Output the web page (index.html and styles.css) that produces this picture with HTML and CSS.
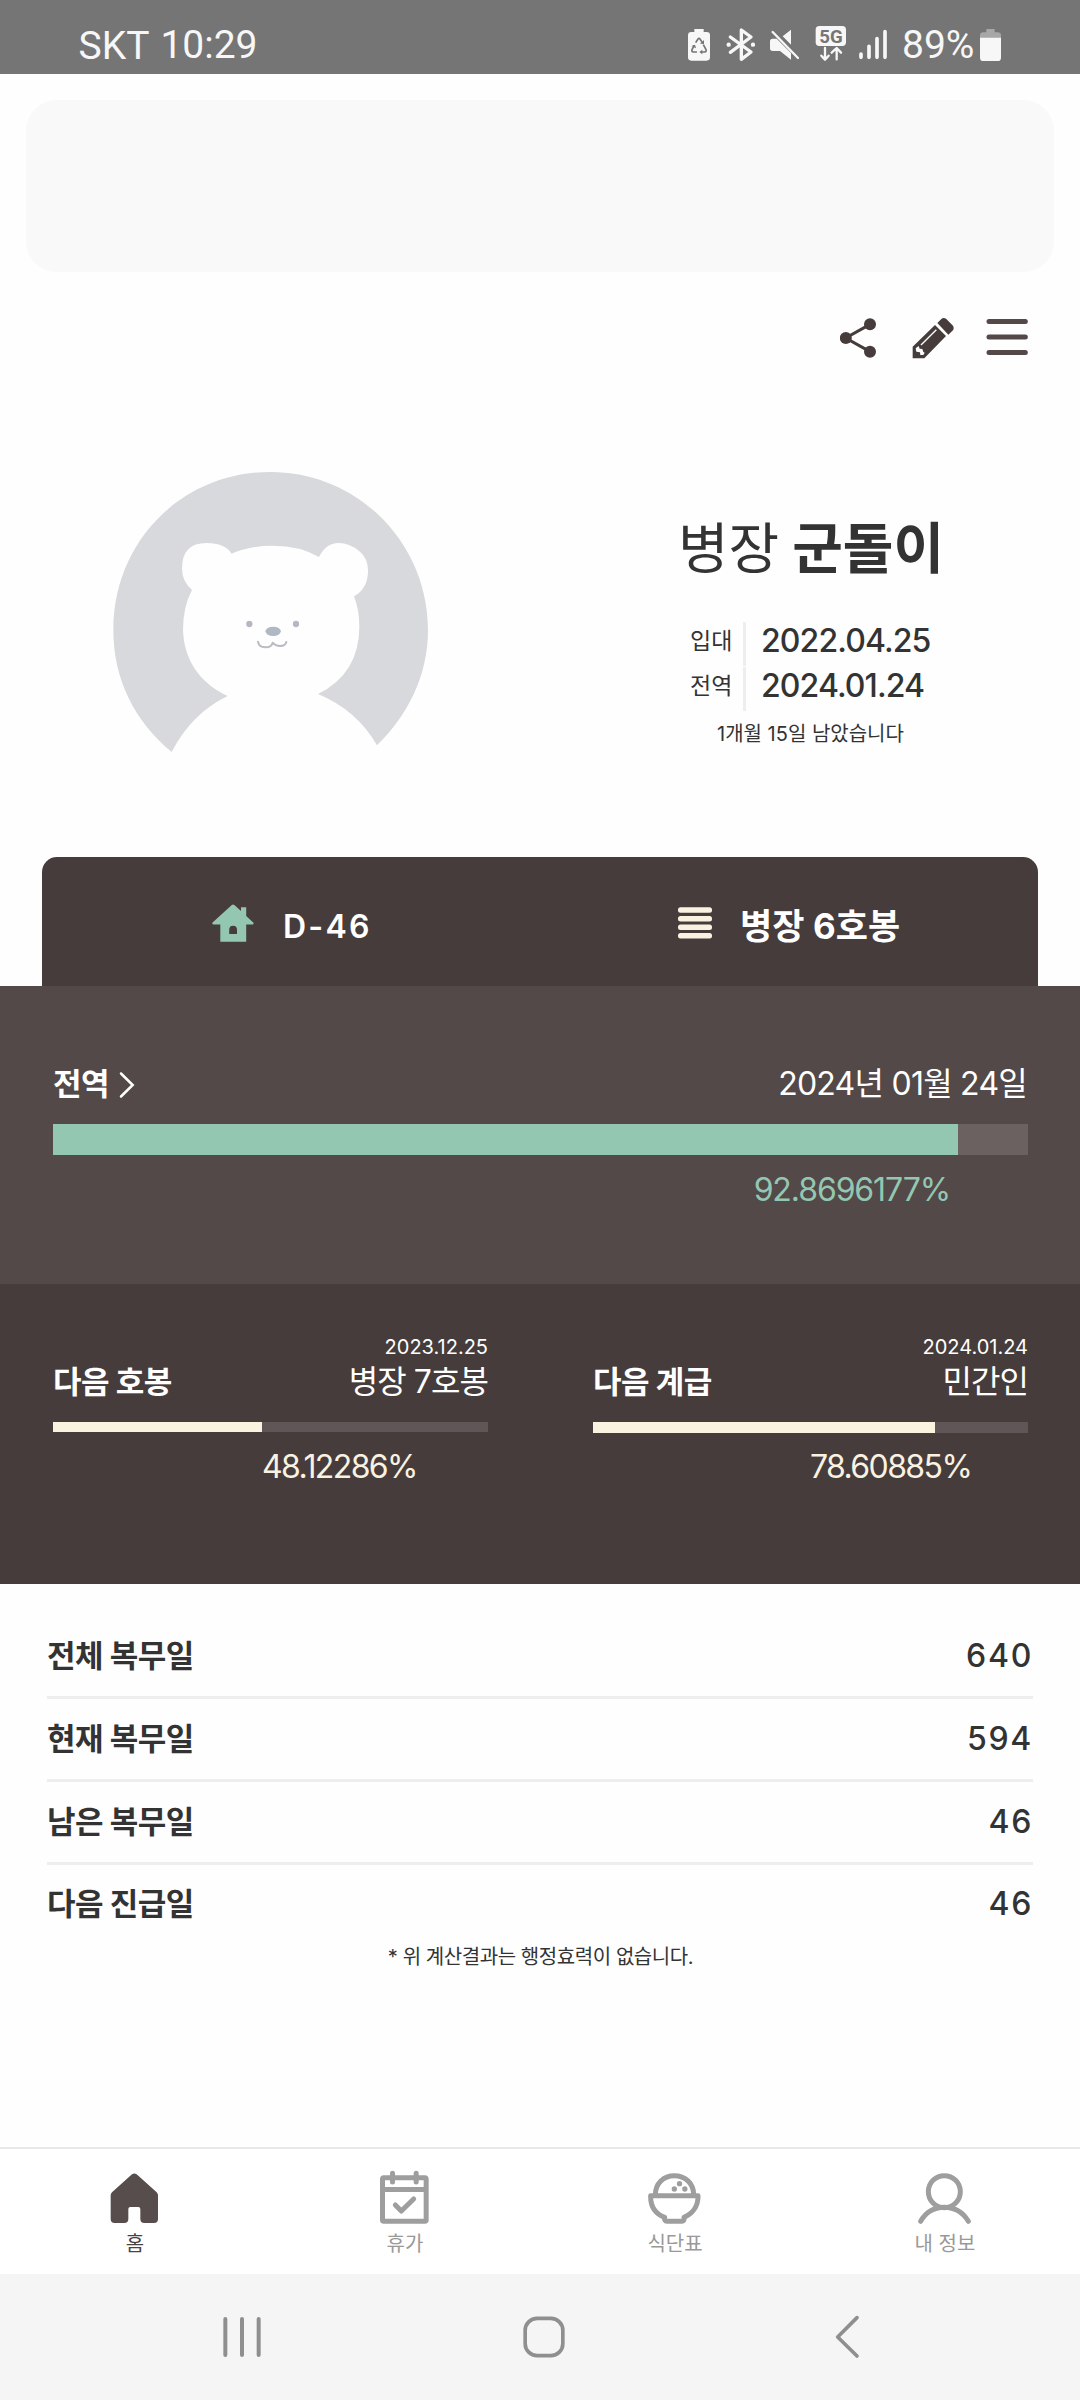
FILE: index.html
```html
<!DOCTYPE html>
<html lang="ko">
<head>
<meta charset="utf-8">
<title>군돌이</title>
<link rel="stylesheet" href="styles.css">
</head>
<body>
<div class="screen">

<header class="status">
  <span class="carrier">SKT</span>
  <span class="clock">10:29</span>
  <div class="status-icons">
    <svg class="ic-saver" width="22" height="36" viewBox="84 78 66 108">
      <path fill="#f7f7f7" d="M103 87h28v9h9q10 0 10 10v66q0 10-10 10H94q-10 0-10-10v-66q0-10 10-10h9z"/>
      <g fill="none" stroke="#757575" stroke-width="5"><path d="M107 128l7-11q3-4 6 0l7 11M130 134l8 15q2 6-4 7h-11M111 156h-11q-6-1-4-7l7-13"/></g>
      <path fill="#757575" d="M120 131l12 1 0-12zM127 149v14l-9-7zM94 138l11-4 3 11z"/>
    </svg>
    <svg class="ic-bt" width="29" height="36" viewBox="198 78 87 108">
      <path fill="none" stroke="#f7f7f7" stroke-width="10" stroke-linecap="round" stroke-linejoin="round" d="M211 111l62 45-29 22V90l29 21-62 46"/>
      <circle cx="206" cy="134" r="6.5" fill="#f7f7f7"/><circle cx="279" cy="134" r="6.5" fill="#f7f7f7"/>
    </svg>
    <svg class="ic-mute" width="29" height="36" viewBox="330 78 87 108">
      <path fill="#f7f7f7" d="M368 109l25-20v45zM338 116h12l43 43v20l-33-26h-22q-8 0-8-8v-21q0-8 8-8z"/>
      <path stroke="#757575" stroke-width="5" d="M345 92l75 75"/>
      <path stroke="#f7f7f7" stroke-width="7" stroke-linecap="round" d="M338 96l76 78"/>
    </svg>
    <svg class="ic-5g" width="32" height="36" viewBox="465 78 96 108">
      <rect x="467" y="78" width="91" height="60" rx="11" fill="#f7f7f7"/>
      <text class="net" x="513" y="128" text-anchor="middle">5G</text>
      <path fill="none" stroke="#f7f7f7" stroke-width="7" stroke-linecap="round" stroke-linejoin="round" d="M495 144v34M484 167l11 12 11-12M530 178v-32M515 158l15-14 13 14"/>
    </svg>
    <svg class="ic-signal" width="28" height="36" viewBox="597 78 84 108">
      <g stroke="#f7f7f7" stroke-width="11" stroke-linecap="round"><path d="M603 162v10M627 139v33M651 116v56M675 95v77"/></g>
    </svg>
    <span class="battery-text">89%</span>
    <svg class="ic-battery" width="21" height="36" viewBox="960 78 63 108">
      <path fill="#a7a7a7" d="M979 87h25v10h9q10 0 10 10v8h-63v-8q0-10 10-10h9z"/>
      <path fill="#f7f7f7" d="M960 113h63v60q0 10-10 10h-43q-10 0-10-10z"/>
    </svg>
  </div>
</header>

<div class="banner"></div>

<nav class="toolbar">
  <svg width="36" height="42" viewBox="540 951 108 126">
    <path stroke="#463c3c" stroke-width="9" fill="none" d="M630 973l-73 41 73 41"/>
    <g fill="#463c3c"><circle cx="630" cy="973" r="18"/><circle cx="557.500" cy="1014" r="18"/><circle cx="630" cy="1055" r="18"/></g>
  </svg>
  <svg width="42" height="42" viewBox="757 951 126 126">
    <path fill="#463c3c" d="M826 975l33 33-65 67h-35v-35zM833 969l12-12q7-6 15 0l20 20q4 7 0 14l-14 13z"/>
    <path stroke="#fff" stroke-width="4" d="M784 1035l46-46"/>
    <path fill="#fff" d="M768 1045l9-7 3 8 8 1 3 9 4 2-4 7h-9l-1-8-11-2z"/>
  </svg>
  <svg width="42" height="42" viewBox="978 951 126 126">
    <path stroke="#524948" stroke-width="15" stroke-linecap="round" d="M987 964.500h109M987 1011h109M987 1057.500h109"/>
  </svg>
</nav>

<section class="profile">
  <div class="avatar">
    <svg width="360" height="320" viewBox="0 0 1080 960">
      <path fill="#d8d9dd" d="M245 906C135 815 70 690 70 540C70 270 280 66 541 66C805 66 1014 280 1014 540C1014 680 950 800 861 886Q800 780 684 732Q808 670 808 530Q808 480 792 439Q834 415 834 362Q834 325 810 305Q780 279 745 279Q708 279 687 321Q630 287 548 287Q480 287 425 311Q405 279 350 279Q276 279 276 355Q276 395 306 420Q279 470 279 540C282 630 330 700 413 738Q305 790 245 906Z"/>
      <circle cx="478" cy="522" r="9.500" fill="#b5b8c3"/><circle cx="618" cy="522" r="9.500" fill="#b5b8c3"/>
      <ellipse cx="549.500" cy="544" rx="23" ry="14" fill="#b0b8c4"/>
      <path fill="none" stroke="#b8bac4" stroke-width="6" stroke-linecap="round" stroke-linejoin="round" d="M504 575Q507 592 526 592Q545 592 548 578Q556 588 571 588Q586 588 589 576"/>
    </svg>
  </div>
  <div class="info">
    <div class="name"><span>병장</span><strong>군돌이</strong></div>
    <div class="dates">
      <div class="date-row"><span class="date-label">입대</span><i></i><span class="date-value">2022.04.25</span></div>
      <div class="date-row"><span class="date-label">전역</span><i></i><span class="date-value">2024.01.24</span></div>
    </div>
    <div class="remain">1개월 15일 남았습니다</div>
  </div>
</section>

<section class="tabs">
  <div class="tab tab-dday">
    <svg width="42" height="38" viewBox="0 0 42 38">
      <path fill="#93c7b1" fill-rule="evenodd" d="M21 0.500q.7 0 1.400.6l6.600 6V3.300h5.200v8.800l7.300 6.600q.5 1.800-.9 1.800h-6.400v17.200H8.300V20.500H1.500q-1.500 0-1.200-1.800L19.800 1Q20.400.5 21 .5zM17.200 30h7.800v-4.300a3.900 3.900 0 0 0-7.800 0z"/>
    </svg>
    <span>D-46</span>
  </div>
  <div class="tab tab-rank">
    <svg width="34" height="32" viewBox="0 0 34 32">
      <g fill="#faf2e1"><rect y=".3" width="34" height="5.500" rx="2.500"/><rect y="9" width="34" height="5.500" rx="2.500"/><rect y="17.500" width="34" height="5.500" rx="2.500"/><rect y="26" width="34" height="5.500" rx="2.500"/></g>
    </svg>
    <span>병장 6호봉</span>
  </div>
</section>

<section class="total">
  <div class="row">
    <div class="total-title"><strong>전역</strong>
      <svg width="16" height="28" viewBox="0 0 16 28"><path d="M2 2.500L13.700 14 2 25.500" fill="none" stroke="#fff" stroke-width="2.500" stroke-linecap="round"/></svg>
    </div>
    <span class="total-date">2024년 01월 24일</span>
  </div>
  <div class="bar bar-total"><div class="fill" style="width:92.8696177%"></div></div>
  <div class="pct pct-total">92.8696177%</div>
</section>

<section class="steps">
  <div class="step">
    <div class="step-date">2023.12.25</div>
    <div class="row"><strong>다음 호봉</strong><span class="grade">병장 7호봉</span></div>
    <div class="bar bar-step"><div class="fill" style="width:48.12286%"></div></div>
    <div class="pct pct-grade">48.12286%</div>
  </div>
  <div class="step">
    <div class="step-date">2024.01.24</div>
    <div class="row"><strong>다음 계급</strong><span class="grade">민간인</span></div>
    <div class="bar bar-step bar-class"><div class="fill" style="width:78.60885%"></div></div>
    <div class="pct pct-class">78.60885%</div>
  </div>
</section>

<section class="list">
  <div class="item"><strong>전체 복무일</strong><span>640</span></div>
  <div class="item"><strong>현재 복무일</strong><span>594</span></div>
  <div class="item"><strong>남은 복무일</strong><span>46</span></div>
  <div class="item"><strong>다음 진급일</strong><span>46</span></div>
</section>
<p class="note">* 위 계산결과는 행정효력이 없습니다.</p>

<nav class="menu">
  <a class="menu-item active">
    <svg width="54" height="54" viewBox="144 120 162 162"><path fill="#574d4c" d="M216 133q7-5 14 0l60 54q4 4 4 9v71q0 12-12 12h-29q-12 0-12-12v-30q0-6-6-6h-24q-6 0-6 6v30q0 12-12 12h-29q-12 0-12-12v-71q0-5 4-9z"/></svg>
    <span>홈</span>
  </a>
  <a class="menu-item">
    <svg width="54" height="54" viewBox="954 120 162 162"><g fill="none" stroke="#9e9e9e" stroke-width="15" stroke-linecap="round" stroke-linejoin="round"><rect x="967.500" y="143" width="131" height="131" rx="4"/><path stroke-linecap="butt" d="M967 178.500h132"/><path d="M997.500 130v26M1068.500 130v26"/><path d="M1006 225l18 18 37-36"/></g></svg>
    <span>휴가</span>
  </a>
  <a class="menu-item">
    <svg width="54" height="54" viewBox="444 120 162 162"><g fill="none" stroke="#9e9e9e" stroke-width="15" stroke-linejoin="round"><path d="M466 194C466 160 491 137 523 137C555 137 581 160 581 194M452 197h142C595 230 576 252 552 262Q554 274 545 274H501Q492 274 494 262C468 252 451 230 452 197z"/></g><g fill="#9e9e9e"><circle cx="538.500" cy="161" r="8"/><circle cx="523" cy="177" r="8"/><circle cx="554.500" cy="177" r="8"/></g></svg>
    <span>식단표</span>
  </a>
  <a class="menu-item">
    <svg width="54" height="54" viewBox="1254 120 162 162"><g fill="none" stroke="#9e9e9e" stroke-width="15" stroke-linecap="round"><circle cx="1333" cy="185" r="48"/><path d="M1262 274Q1285 233 1333 232Q1381 233 1405 274"/></g></svg>
    <span>내 정보</span>
  </a>
</nav>

<footer class="sysbar">
  <svg width="46" height="46" viewBox="477 552 138 138"><path stroke="#8f8f8f" stroke-width="12" stroke-linecap="round" d="M496 567v108M546 567v108M596 567v108"/></svg>
  <svg width="46" height="46" viewBox="66 552 138 138"><rect x="75.500" y="565" width="113" height="112" rx="36" fill="none" stroke="#8f8f8f" stroke-width="11"/></svg>
  <svg width="46" height="46" viewBox="975 552 138 138"><path d="M1071 563l-58 58 58 57" fill="none" stroke="#8f8f8f" stroke-width="11" stroke-linecap="round" stroke-linejoin="round"/></svg>
</footer>

</div>
</body>
</html>
```
FILE: styles.css
```css
* { box-sizing: border-box; }
body {
  margin: 0;
  background: #fefefe;
  color: #333;
  font-family: Inter, "Noto Sans CJK KR", sans-serif;
  white-space: nowrap;
}
svg { display: block; flex: none; }
.screen { width: 1080px; height: 2400px; display: flex; flex-direction: column; overflow: hidden; }
.screen > * { flex: none; }

.status {
  height: 74px; padding: 22px 79px 0 78.5px; background: #757575; color: #f7f7f7;
  display: flex; align-items: flex-start; font: 39px/46px Roboto, sans-serif;
}
.carrier { padding-top: 1px; }
.clock { margin-left: 11px; }
.status-icons { margin-left: auto; display: flex; align-items: flex-start; }
.status-icons svg { margin-top: 4px; }
.status-icons .ic-bt { margin-left: 16px; }
.status-icons .ic-mute { margin-left: 15px; }
.status-icons .ic-5g { margin-left: 16px; }
.status-icons .ic-signal { margin-left: 12px; }
.battery-text { margin-left: 15px; width: 72.5px; }
.status-icons .ic-battery { margin-left: 5.5px; }
.net { font: 700 56px Roboto, sans-serif; fill: #757575; }

.banner { height: 172px; margin: 26px 26px 0; border-radius: 31px; background: #f9f9f9; }

.toolbar { display: flex; justify-content: flex-end; height: 87px; padding: 45px 52px 0 0; }
.toolbar svg + svg { margin-left: 32px; }
.toolbar svg:nth-child(2) { margin-left: 36px; }

.profile { height: 498px; padding-top: 91px; display: grid; grid-template-columns: 1fr 1fr; }
.avatar { display: flex; justify-content: center; align-items: flex-start; }
.info { padding-top: 65px; }
.name { display: flex; justify-content: center; gap: 13px; padding-left: 2px; font-size: 55px; line-height: 66px; }
.dates { margin: 41px 0 0 150px; display: grid; row-gap: 1px; }
.date-row { display: flex; height: 44px; }
.date-row i { width: 3px; margin: 0 15.5px 0 10.5px; background: #eee; }
.date-label { width: 42px; font-size: 23px; line-height: 38px; }
.date-value { font-size: 32px; font-weight: 450; line-height: 38px; letter-spacing: -.9px; }
.remain { margin-top: 9px; padding-left: 1px; text-align: center; font-size: 20px; line-height: 28px; }

.tabs { height: 129px; margin: 0 42px; padding-top: 46px; border-radius: 15px 15px 0 0; background: #463c3c; color: #fff; display: grid; grid-template-columns: 1fr 1fr; }
.tab { display: flex; align-items: flex-start; line-height: 46px; }
.tab-dday { padding-left: 170px; gap: 29px; font-size: 32px; font-weight: 600; letter-spacing: 2.2px; line-height: 47px; }
.tab-dday svg { margin-top: 1px; }
.tab-rank { padding-left: 138px; gap: 28px; font-size: 35px; font-weight: 700; letter-spacing: .1px; }
.tab-rank svg { margin-top: 4px; }

.row { display: flex; justify-content: space-between; line-height: 40px; }
.total { height: 298px; padding: 77.5px 52px 0 53px; background: #524948; color: #fff; }
.total-title, .step strong { font-size: 31px; }
.total-title { display: flex; gap: 10px; letter-spacing: -.4px; }
.total-title svg { margin-top: 7px; }
.total-date { font-size: 32px; letter-spacing: -.75px; padding-right: 1px; }
.bar .fill { height: 100%; }
.bar-total { height: 31px; margin-top: 20.5px; background: #6b6161; }
.bar-total .fill { background: #93c7b1; }
.pct { font-size: 32px; line-height: 40px; margin-top: 15px; }
.pct-total { text-align: right; padding-right: 78px; color: #93c7b1; letter-spacing: -1.1px; }

.steps { height: 300px; padding: 48.7px 52px 0 53px; background: #463c3c; color: #fff; display: grid; grid-template-columns: 1fr 1fr; column-gap: 105px; }
.step-date { text-align: right; font-size: 20px; line-height: 28px; margin-bottom: 1px; }
.step strong { letter-spacing: -.55px; }
.grade { font-size: 32px; letter-spacing: -.95px; }
.bar-step { height: 10px; margin-top: 20.3px; background: #615657; }
.bar-step .fill { background: #faf3df; }
.bar-class { height: 11px; margin-bottom: -1px; }
.steps .pct { color: #faf2e1; letter-spacing: -1.6px; }
.pct-grade { padding-left: 209px; }
.pct-class { padding-left: 217px; }

.list { padding: 31.5px 47px 0; }
.item { height: 83px; display: flex; justify-content: space-between; border-bottom: 3px solid #eee; line-height: 80px; }
.item:last-child { height: 78px; border: 0; line-height: 78px; }
.item strong { font-size: 31px; letter-spacing: -.55px; }
.item span { font-size: 32px; font-weight: 450; letter-spacing: 1.7px; }
.note { margin: 0; padding-left: 1px; text-align: center; font-size: 20px; line-height: 28px; letter-spacing: -.43px; }

.menu { margin-top: auto; height: 127px; padding-top: 21px; border-top: 2px solid #e8e8e8; background: #fff; display: grid; grid-template-columns: repeat(4, 1fr); }
.menu-item { display: flex; flex-direction: column; align-items: center; gap: 6px; font-size: 20px; line-height: 28px; color: #999; }
.active { color: #4a4241; }

.sysbar { height: 126px; padding: 40px 209px 0 219px; background: #f5f5f5; display: flex; justify-content: space-between; }
```
